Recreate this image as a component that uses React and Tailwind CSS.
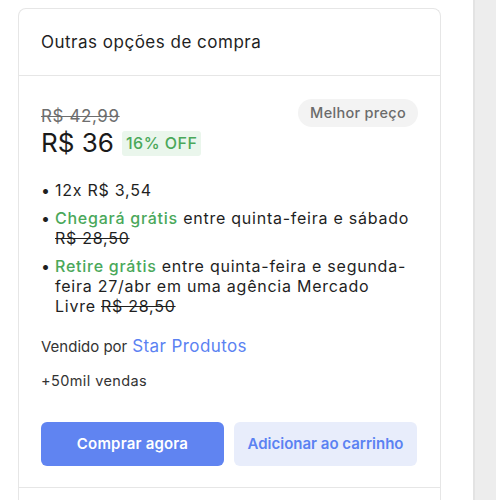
export default function App() {
  const green = 'text-[#4aa85a]';
  return (
    <div className="flex min-h-[500px] bg-white font-['Inter',sans-serif] text-[#1f1f1f]">
      <div className="w-[473px] shrink-0 pl-[18px] pr-[32px] pt-[8px]">
        <div className="rounded-t-[8px] border border-b-0 border-[#e6e6e6]">
          <div className="flex h-[67px] items-center border-b border-[#e6e6e6] px-[22px]">
            <h2 className="pt-[2px] text-[17px] font-normal tracking-[0.5px] text-[#1f1f1f]">Outras opções de compra</h2>
          </div>
          <div className="px-[22px] pt-[30px] pb-[21px]">
            <div className="flex items-start justify-between">
              <div>
                <div className="text-[17px] leading-[20px] tracking-[0.6px] text-[#6e6e6e] line-through">R$ 42,99</div>
                <div className="mt-[2px] flex items-center gap-[8px]">
                  <span className="text-[26px] leading-[30px] text-[#1a1a1a]">R$ 36</span>
                  <span className={`rounded-[3px] bg-[#eaf6ec] px-[4px] py-[2px] text-[16px] font-medium leading-[21px] tracking-[0.5px] ${green}`}>16% OFF</span>
                </div>
              </div>
              <span className="mt-[-7px] rounded-full bg-[#f3f3f3] px-[12px] py-[5px] text-[14.5px] font-medium leading-[18px] tracking-[0.3px] text-[#6b6b6b]">Melhor preço</span>
            </div>

            <ul className="mt-[22px] mr-[6px] flex flex-col gap-[8px] text-[16px] leading-[20px] tracking-[0.75px]">
              <li className="flex gap-[6px]">
                <span className="w-[8px] shrink-0 text-center tracking-normal">•</span>
                <span>12x R$ 3,54</span>
              </li>
              <li className="flex gap-[6px]">
                <span className="w-[8px] shrink-0 text-center tracking-normal">•</span>
                <span>
                  <span className={`font-medium ${green}`}>Chegará grátis</span> entre quinta-feira e sábado{' '}
                  <span className="whitespace-nowrap line-through">R$ 28,50</span>
                </span>
              </li>
              <li className="flex gap-[6px]">
                <span className="w-[8px] shrink-0 text-center tracking-normal">•</span>
                <span>
                  <span className={`font-medium ${green}`}>Retire grátis</span> entre quinta-feira e segunda-feira 27/abr em uma agência Mercado{' '}
                  <span className="whitespace-nowrap">
                    Livre <span className="line-through">R$ 28,50</span>
                  </span>
                </span>
              </li>
            </ul>

            <div className="mt-[18px] flex items-baseline gap-[5px]">
              <span className="text-[15px] text-[#333]">Vendido por</span>
              <span className="text-[17px] tracking-[0.4px] text-[#5b82f2]">Star Produtos</span>
            </div>
            <div className="mt-[10px] text-[14.5px] tracking-[0.4px] text-[#333]">+50mil vendas</div>

            <div className="mt-[31px] flex gap-[10px]">
              <button className="h-[44px] w-[183px] rounded-[6px] bg-[#6084f1] text-[15px] font-semibold tracking-[0.2px] text-white">Comprar agora</button>
              <button className="h-[44px] w-[183px] rounded-[6px] bg-[#e8edfb] text-[15px] font-semibold text-[#5b82f2]">Adicionar ao carrinho</button>
            </div>
          </div>
          <div className="h-[20px] border-t border-[#e6e6e6]"></div>
        </div>
      </div>
      <div className="flex-1 border-l-2 border-[#e3e3e3] bg-[#ededed]"></div>
    </div>
  );
}
